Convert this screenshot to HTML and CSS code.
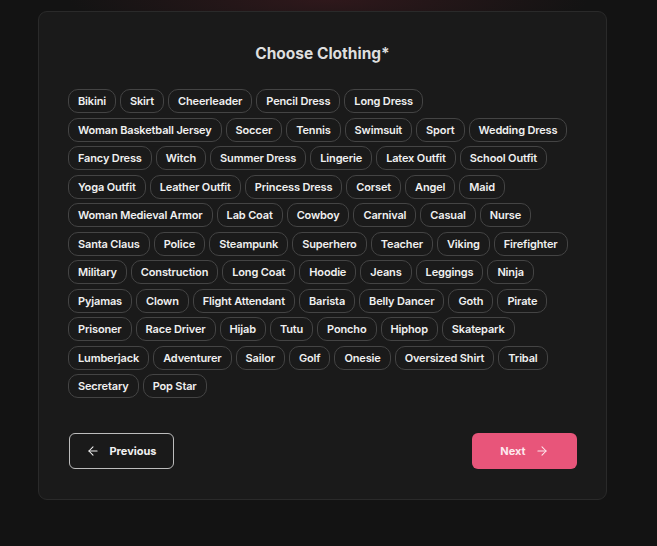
FILE: index.html
```html
<!DOCTYPE html>
<html lang="en">
<head>
    <meta charset="UTF-8">
    <meta name="viewport" content="width=device-width, initial-scale=1.0">
    <title>Choose Clothing</title>
    <link rel="stylesheet" href="styles.css">
</head>
<body>

    <div class="page">
        <div class="card">
            <h2 class="title">Choose Clothing*</h2>

            <div class="options">
                <button class="chip">Bikini</button>
                <button class="chip">Skirt</button>
                <button class="chip">Cheerleader</button>
                <button class="chip">Pencil Dress</button>
                <button class="chip">Long Dress</button>
                <button class="chip">Woman Basketball Jersey</button>
                <button class="chip">Soccer</button>
                <button class="chip">Tennis</button>
                <button class="chip">Swimsuit</button>
                <button class="chip">Sport</button>
                <button class="chip">Wedding Dress</button>
                <button class="chip">Fancy Dress</button>
                <button class="chip">Witch</button>
                <button class="chip">Summer Dress</button>
                <button class="chip">Lingerie</button>
                <button class="chip">Latex Outfit</button>
                <button class="chip">School Outfit</button>
                <button class="chip">Yoga Outfit</button>
                <button class="chip">Leather Outfit</button>
                <button class="chip">Princess Dress</button>
                <button class="chip">Corset</button>
                <button class="chip">Angel</button>
                <button class="chip">Maid</button>
                <button class="chip">Woman Medieval Armor</button>
                <button class="chip">Lab Coat</button>
                <button class="chip">Cowboy</button>
                <button class="chip">Carnival</button>
                <button class="chip">Casual</button>
                <button class="chip">Nurse</button>
                <button class="chip">Santa Claus</button>
                <button class="chip">Police</button>
                <button class="chip">Steampunk</button>
                <button class="chip">Superhero</button>
                <button class="chip">Teacher</button>
                <button class="chip">Viking</button>
                <button class="chip">Firefighter</button>
                <button class="chip">Military</button>
                <button class="chip">Construction</button>
                <button class="chip">Long Coat</button>
                <button class="chip">Hoodie</button>
                <button class="chip">Jeans</button>
                <button class="chip">Leggings</button>
                <button class="chip">Ninja</button>
                <button class="chip">Pyjamas</button>
                <button class="chip">Clown</button>
                <button class="chip">Flight Attendant</button>
                <button class="chip">Barista</button>
                <button class="chip">Belly Dancer</button>
                <button class="chip">Goth</button>
                <button class="chip">Pirate</button>
                <button class="chip">Prisoner</button>
                <button class="chip">Race Driver</button>
                <button class="chip">Hijab</button>
                <button class="chip">Tutu</button>
                <button class="chip">Poncho</button>
                <button class="chip">Hiphop</button>
                <button class="chip">Skatepark</button>
                <button class="chip">Lumberjack</button>
                <button class="chip">Adventurer</button>
                <button class="chip">Sailor</button>
                <button class="chip">Golf</button>
                <button class="chip">Onesie</button>
                <button class="chip">Oversized Shirt</button>
                <button class="chip">Tribal</button>
                <button class="chip">Secretary</button>
                <button class="chip">Pop Star</button>
            </div>

            <div class="nav">
                <button class="btn btn-prev">
                    <svg viewBox="0 0 24 24" width="14" height="14" fill="none" stroke="currentColor" stroke-width="1.8" stroke-linecap="round" stroke-linejoin="round"><path d="M19 12H5"/><path d="M12 19l-7-7 7-7"/></svg>
                    Previous
                </button>
                <button class="btn btn-next">
                    Next
                    <svg viewBox="0 0 24 24" width="14" height="14" fill="none" stroke="currentColor" stroke-width="1.8" stroke-linecap="round" stroke-linejoin="round"><path d="M5 12h14"/><path d="M12 5l7 7-7 7"/></svg>
                </button>
            </div>
        </div>
    </div>

</body>
</html>
```

FILE: styles.css
```css
/* base */
body {
    margin: 0;
    min-height: 100vh;
    background-color: #131313;
    background-image: radial-gradient(ellipse 260px 40px at 50% 0, rgba(70, 28, 34, 0.55), transparent);
    font-family: Inter, "Open Sans", Arial, sans-serif;
    color: #e8e8e8;
}

.page {
    padding: 11px 0 0 38px;
}

/* card */
.card {
    width: 569px;
    box-sizing: border-box;
    padding: 32px 29px 30px;
    background-color: #1a1a1a;
    border: 1px solid #2a2a2a;
    border-radius: 9px;
}

.title {
    margin: 0 0 25px;
    text-align: center;
    font-size: 15.5px;
    line-height: 20px;
    font-weight: 700;
    color: #dedede;
}

/* option chips */
.options {
    display: flex;
    flex-wrap: wrap;
    gap: 4.5px 4px;
}

.chip {
    margin: 0;
    height: 24px;
    padding: 0 9px;
    background-color: #1a1a1a;
    border: 1px solid #444;
    border-radius: 10px;
    color: #f0f0f0;
    font-family: inherit;
    font-size: 11px;
    font-weight: 600;
    line-height: 14px;
    letter-spacing: -0.15px;
    cursor: pointer;
}

.chip:hover {
    border-color: #666;
}

/* navigation */
.nav {
    display: flex;
    justify-content: space-between;
    margin-top: 35px;
    padding-left: 1px;
}

.btn {
    display: flex;
    align-items: center;
    justify-content: center;
    gap: 9px;
    width: 105px;
    height: 36px;
    margin: 0;
    border-radius: 6px;
    font-family: inherit;
    font-size: 11px;
    font-weight: 700;
    cursor: pointer;
}

.btn-prev {
    background: transparent;
    border: 1px solid #bdbdbd;
    color: #f2f2f2;
}

.btn-next {
    background-color: #e8557a;
    border: none;
    color: #fde8ee;
}
```
